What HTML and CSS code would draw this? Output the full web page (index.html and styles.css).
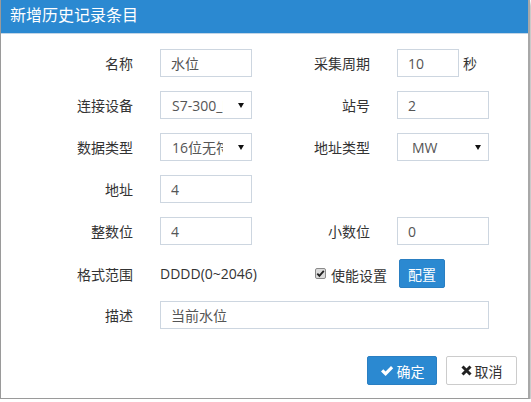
FILE: index.html
```html
<!DOCTYPE html>
<html lang="zh-CN">
<head>
    <meta charset="UTF-8">
    <meta name="viewport" content="width=device-width, initial-scale=1.0">
    <title>新增历史记录条目</title>
    <link rel="stylesheet" href="styles.css">
</head>
<body>
    <div class="dialog">
        <div class="dialog-header">新增历史记录条目</div>

        <div class="dialog-body">
            <div class="row">
                <label class="lbl">名称</label>
                <input class="field" type="text" value="水位">
                <label class="lbl">采集周期</label>
                <div class="with-unit">
                    <input class="field short" type="text" value="10">
                    <span class="unit">秒</span>
                </div>
            </div>

            <div class="row">
                <label class="lbl">连接设备</label>
                <div class="select"><span class="val">S7-300_PLC1</span><span class="arrow"></span></div>
                <label class="lbl">站号</label>
                <input class="field" type="text" value="2">
            </div>

            <div class="row">
                <label class="lbl">数据类型</label>
                <div class="select"><span class="val">16位无符号</span><span class="arrow"></span></div>
                <label class="lbl">地址类型</label>
                <div class="select select-mw"><span class="val">MW</span><span class="arrow"></span></div>
            </div>

            <div class="row">
                <label class="lbl">地址</label>
                <input class="field" type="text" value="4">
            </div>

            <div class="row">
                <label class="lbl">整数位</label>
                <input class="field" type="text" value="4">
                <label class="lbl">小数位</label>
                <input class="field" type="text" value="0">
            </div>

            <div class="row">
                <label class="lbl">格式范围</label>
                <span class="static">DDDD(0~2046)</span>
                <label class="check">
                    <svg class="box" width="11" height="11" viewBox="0 0 11 11">
                        <rect x="0.5" y="0.5" width="10" height="10" rx="1.5" fill="#dcdcdc" stroke="#8a8a8a"/>
                        <path d="M2.3 5.6 L4.4 7.9 L8.8 2.8" fill="none" stroke="#222" stroke-width="1.8"/>
                    </svg>
                    使能设置
                </label>
                <button class="btn btn-blue btn-cfg">配置</button>
            </div>

            <div class="row">
                <label class="lbl">描述</label>
                <input class="field wide" type="text" value="当前水位">
            </div>
        </div>

        <div class="dialog-footer">
            <button class="btn btn-blue">
                <svg width="14" height="12" viewBox="0 0 14 12">
                    <path d="M1 6.5 L3.3 4.3 L5.6 6.6 L11 1 L13.2 3.3 L5.6 11 Z" fill="#fff"/>
                </svg>
                确定
            </button>
            <button class="btn btn-default">
                <svg width="11" height="11" viewBox="0 0 11 11">
                    <path d="M1.5 1.5 L9.5 9.5 M9.5 1.5 L1.5 9.5" stroke="#222" stroke-width="3"/>
                </svg>
                取消
            </button>
        </div>
    </div>
</body>
</html>
```

FILE: styles.css
```css
body {
    margin: 0;
    background-color: #fff;
    font-family: "Open Sans", "Noto Sans CJK SC", sans-serif;
    font-size: 14px;
    color: #333;
}
.dialog {
    width: 530px;
    box-sizing: border-box;
    border: 1px solid #9a9a9a;
    border-top: none;
    border-right: 2px solid #a8a8a8;
    background-color: #fff;
    box-shadow: 1px 3px 4px rgba(0, 0, 0, 0.35);
}
.dialog-header {
    background-color: #2b89d1;
    color: #fff;
    font-size: 16px;
    height: 33px;
    line-height: 31px;
    padding-left: 9px;
    border-bottom: 1px solid #c2d5e6;
}
.dialog-body {
    padding-top: 15px;
}
.row {
    display: grid;
    grid-template-columns: 159px 92px 145px 92px;
    align-items: center;
    height: 28px;
    margin-bottom: 14px;
}
.row:last-child {
    margin-bottom: 0;
}
.lbl {
    text-align: right;
    padding-right: 27px;
}
.field {
    box-sizing: border-box;
    width: 92px;
    height: 28px;
    border: 1px solid #cdd6e0;
    padding: 0 10px;
    font-family: inherit;
    font-size: 14px;
    color: #555;
    outline: none;
}
.field.short {
    width: 62px;
}
.field.wide {
    grid-column: 2 / 5;
    width: 329px;
}
.with-unit {
    display: flex;
    align-items: center;
    white-space: nowrap;
}
.unit {
    margin-left: 4px;
}
.select {
    box-sizing: border-box;
    width: 92px;
    height: 28px;
    border: 1px solid #cdd6e0;
    display: flex;
    align-items: center;
    justify-content: space-between;
    padding: 0 7px 0 11px;
    color: #555;
}
.select .val {
    width: 51px;
    overflow: hidden;
    white-space: nowrap;
}
.select-mw {
    padding-left: 14px;
}
.arrow {
    width: 0;
    height: 0;
    border-left: 3px solid transparent;
    border-right: 3px solid transparent;
    border-top: 5px solid #111;
}
.static {
    white-space: nowrap;
}
.check {
    justify-self: end;
    padding-right: 10px;
    display: flex;
    align-items: center;
    gap: 5px;
    position: relative;
    top: 1px;
}
.check .box {
    position: relative;
    top: -1px;
}
.btn {
    box-sizing: border-box;
    height: 28px;
    border-radius: 2px;
    font-family: inherit;
    font-size: 14px;
    display: inline-flex;
    align-items: center;
    justify-content: center;
    gap: 3px;
    padding: 0;
    cursor: pointer;
}
.btn-blue {
    background-color: #2b89d1;
    border: 1px solid #2a7fc2;
    color: #fff;
}
.btn-default {
    background-color: #fff;
    border: 1px solid #ccc;
    color: #333;
}
.btn-cfg {
    width: 46px;
    height: 29px;
    margin-left: 2px;
}
.dialog-footer {
    display: flex;
    justify-content: flex-end;
    gap: 9px;
    padding: 27px 11px 13px 0;
}
.dialog-footer .btn {
    height: 29px;
}
.dialog-footer .btn-blue {
    width: 70px;
}
.dialog-footer .btn-default {
    width: 71px;
}
```
